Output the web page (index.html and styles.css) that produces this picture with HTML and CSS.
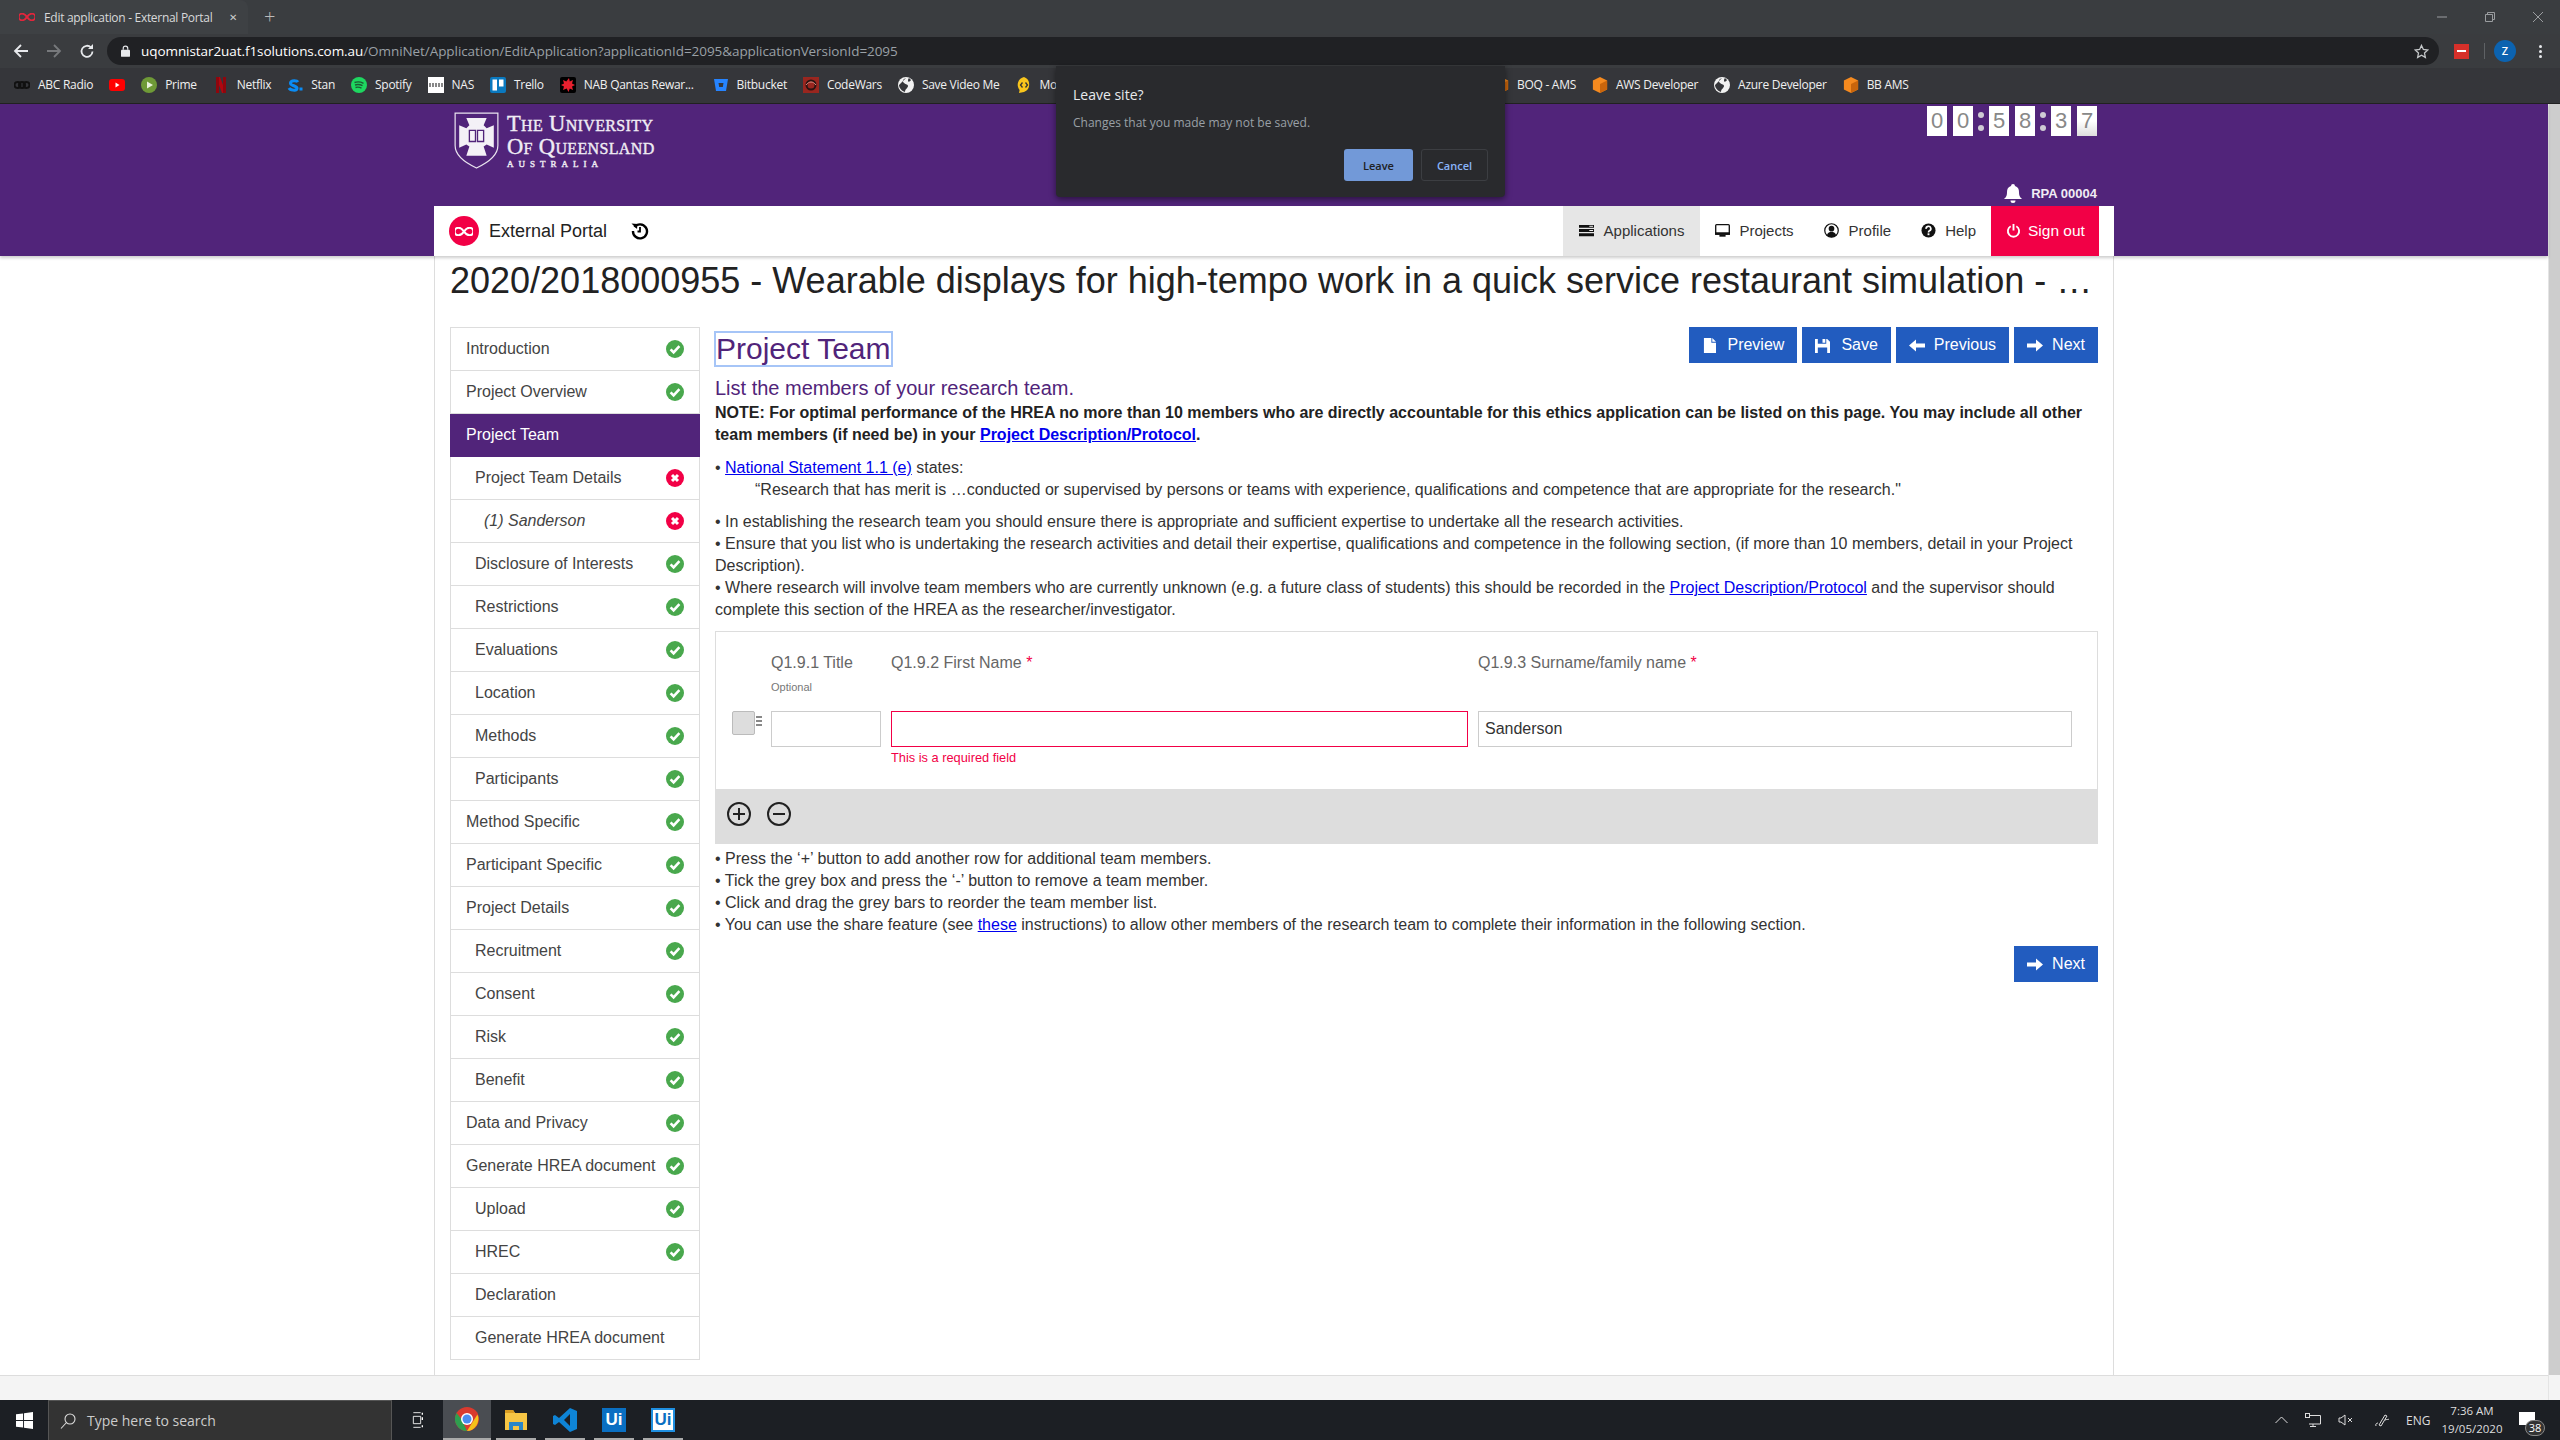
FILE: index.html
```html
<!DOCTYPE html>
<html lang="en">
<head>
<meta charset="utf-8">
<title>Edit application - External Portal</title>
<link rel="stylesheet" href="styles.css">
</head>
<body>
<svg class="defs" width="0" height="0" aria-hidden="true">
  <symbol id="ok" viewBox="0 0 18 18"><circle cx="9" cy="9" r="9" fill="#49a84d"/><path d="M4.6 9.4l3 3 5.8-6.2" fill="none" stroke="#fff" stroke-width="2.6"/></symbol>
  <symbol id="bad" viewBox="0 0 18 18"><circle cx="9" cy="9" r="9" fill="#f20046"/><path d="M6 6l6 6M12 6l-6 6" fill="none" stroke="#fff" stroke-width="3"/></symbol>
  <symbol id="inf" viewBox="0 0 24 12"><path d="M12 6C9 1.500 6.500 1 4.500 1A5 5 0 0 0 4.500 11C6.500 11 9 10.500 12 6C15 1.500 17.500 1 19.500 1A5 5 0 0 1 19.500 11C17.500 11 15 10.500 12 6Z" fill="none" stroke="currentColor" stroke-width="2.800"/></symbol>
  <symbol id="hex" viewBox="0 0 16 18"><path d="M8 0l8 4v10l-8 4-8-4V4z" fill="#f58a1f"/><path d="M8 8l8-4v10l-8 4z" fill="#c9650c"/></symbol>
  <symbol id="globe" viewBox="0 0 16 16"><circle cx="8" cy="8" r="8" fill="#f2f2f2"/><path d="M8 1C5 2 4 4 6 6s4 1 4 3-3 3-3 6c-3-1-6-4-6-7M13 3c-1 2-3 2-3 1s0-2 1-3" fill="#35363a"/></symbol>
</svg>

<header class="chrome">
  <div class="tabstrip">
    <div class="tab">
      <svg class="tab-ico"><use href="#inf"/></svg>
      <span class="tab-title">Edit application - External Portal</span>
      <span class="tab-x">✕</span>
    </div>
    <span class="tab-plus">+</span>
    <div class="winctl">
      <svg width="12" height="12" viewBox="0 0 12 12"><path d="M1 6h10" stroke="#9a9da0"/></svg>
      <svg width="12" height="12" viewBox="0 0 12 12"><path d="M1.500 3.500h7v7h-7zM3.500 3.500v-2h7v7h-2" fill="none" stroke="#9a9da0"/></svg>
      <svg width="12" height="12" viewBox="0 0 12 12"><path d="M1 1l10 10M11 1L1 11" stroke="#9a9da0"/></svg>
    </div>
  </div>
  <div class="toolbar">
    <svg class="tb-ico" viewBox="0 0 16 16"><path d="M15 8H2M8 2L2 8l6 6" fill="none" stroke="#e8eaed" stroke-width="1.800"/></svg>
    <svg class="tb-ico" viewBox="0 0 16 16"><path d="M1 8h13M8 2l6 6-6 6" fill="none" stroke="#77797c" stroke-width="1.800"/></svg>
    <svg class="tb-ico" viewBox="0 0 16 16"><path d="M13.500 8.500A5.500 5.500 0 1 1 12 4.500" fill="none" stroke="#e8eaed" stroke-width="1.800"/><path d="M14 1v5H9z" fill="#e8eaed"/></svg>
    <div class="omnibox">
      <svg class="lock" viewBox="0 0 10 13"><rect y="5" width="10" height="8" rx="1" fill="#e8eaed"/><path d="M2.500 5V3.500a2.500 2.500 0 0 1 5 0V5" fill="none" stroke="#e8eaed" stroke-width="1.300"/></svg>
      <span class="url"><span class="url-host">uqomnistar2uat.f1solutions.com.au</span>/OmniNet/Application/EditApplication?applicationId=2095&amp;applicationVersionId=2095</span>
      <svg class="star" viewBox="0 0 16 16"><path d="M8 1.500l2 4.300 4.700.6-3.500 3.200.9 4.700L8 11.900l-4.100 2.400.9-4.700L1.300 6.400 6 5.800z" fill="none" stroke="#c4c7c9" stroke-width="1.400"/></svg>
    </div>
    <div class="ext-red"><span></span></div>
    <div class="tb-sep"></div>
    <div class="avatar">Z</div>
    <div class="kebab"><i></i><i></i><i></i></div>
  </div>
  <div class="bookmarks">
    <div class="bm"><svg viewBox="0 0 16 16"><circle cx="3.500" cy="8" r="3" fill="none" stroke="#111" stroke-width="2"/><circle cx="8" cy="8" r="3" fill="none" stroke="#111" stroke-width="2"/><circle cx="12.500" cy="8" r="3" fill="none" stroke="#111" stroke-width="2"/></svg>ABC Radio</div>
    <div class="bm bm-icon"><svg viewBox="0 0 16 16"><rect y="2" width="16" height="12" rx="3" fill="#f00"/><path d="M6.500 5.500l4 2.500-4 2.500z" fill="#fff"/></svg></div>
    <div class="bm"><svg viewBox="0 0 16 16"><circle cx="8" cy="8" r="8" fill="#6f9a37"/><path d="M6 4.500l6 3.500-6 3.500z" fill="#e9f2dc"/></svg>Prime</div>
    <div class="bm"><svg viewBox="0 0 16 16"><path d="M3 0h4l6 16H9z" fill="#b00710"/><path d="M3 0h3v16H3zM10 0h3v16h-3z" fill="#8f060d"/></svg>Netflix</div>
    <div class="bm"><svg viewBox="0 0 16 16"><path d="M11 5C10 3.500 4 3 3.500 6s7 2.500 6.500 5.500S3 13 2 11" fill="none" stroke="#0a8cf5" stroke-width="3"/><rect x="12.500" y="10.500" width="3" height="3" fill="#0a8cf5"/></svg>Stan</div>
    <div class="bm"><svg viewBox="0 0 16 16"><circle cx="8" cy="8" r="8" fill="#1ed760"/><path d="M3.500 5.500c3-1 6-.8 9 .8M4 8c2.500-.8 5-.6 7.500.7M4.500 10.500c2-.6 4-.4 6 .6" fill="none" stroke="#1c5c33" stroke-width="1.400"/></svg>Spotify</div>
    <div class="bm"><svg viewBox="0 0 16 16"><rect width="16" height="16" fill="#fff"/><path d="M1 8h14" stroke="#888" stroke-width="4" stroke-dasharray="2 1"/></svg>NAS</div>
    <div class="bm"><svg viewBox="0 0 16 16"><rect width="16" height="16" rx="2" fill="#0a79bf"/><rect x="2.500" y="2.500" width="4.500" height="11" fill="#fff"/><rect x="9" y="2.500" width="4.500" height="7" fill="#fff"/></svg>Trello</div>
    <div class="bm bm-long"><svg viewBox="0 0 16 16"><rect width="16" height="16" rx="2" fill="#000"/><path d="M9 1l.8 3.500L13 3l-1 3.500L15 8l-3 1.500 1 3.500-3.200-1.500L8.500 15l-1.800-3.500L3 13l1-3.500L1 8l3-1.500L3 3l3.300 1.500z" fill="#e8202e"/></svg>NAB Qantas Rewar...</div>
    <div class="bm"><svg viewBox="0 0 16 16"><path d="M1 2h14l-2 12H3z" fill="#2684ff"/><path d="M5.500 6h5l-.7 4H6.200z" fill="#35363a"/></svg>Bitbucket</div>
    <div class="bm"><svg viewBox="0 0 16 16"><rect width="16" height="16" fill="#99261f"/><circle cx="8" cy="8" r="4.500" fill="none" stroke="#2b1412" stroke-width="2"/><path d="M3 8c3-4 7-4 10 0" fill="none" stroke="#d98a80" stroke-width="1"/></svg>CodeWars</div>
    <div class="bm"><svg><use href="#globe"/></svg>Save Video Me</div>
    <div class="bm"><svg viewBox="0 0 16 16"><path d="M8 0a8 8 0 0 1 0 15L3 16l.6-3A8 8 0 0 1 8 0z" fill="#f8c51c"/><path d="M6.500 5.500L4.500 8l2 2.500M9.500 5.500l2 2.500-2 2.500" fill="none" stroke="#333" stroke-width="1.300"/></svg>Mobile</div>
    <div class="bm bm-far"><svg><use href="#hex"/></svg>BOQ - AMS</div>
    <div class="bm"><svg><use href="#hex"/></svg>AWS Developer</div>
    <div class="bm"><svg><use href="#globe"/></svg>Azure Developer</div>
    <div class="bm"><svg><use href="#hex"/></svg>BB AMS</div>
  </div>
</header>

<div class="viewport">
  <div class="site">
    <div class="banner">
      <div class="banner-inner">
        <div class="masthead">
          <div class="uq">
            <svg class="uq-shield" viewBox="0 0 44 56">
              <path d="M1 1h42v32c0 10-10 17-21 22C11 50 1 43 1 33z" fill="none" stroke="#e9e3ef" stroke-width="1.200"/>
              <path d="M12 6h20l-3 7 3 3 7-3v22l-7-3-3 2 3 9H12l3-9-3-2-7 3V13l7 3 3-3z" fill="#f4f1f7"/>
              <path d="M15 18h6v11h-6zM23 18h6v11h-6z" fill="none" stroke="#51247a" stroke-width="1.300"/>
            </svg>
            <div class="uq-name">
              <div class="uq-line">The University</div>
              <div class="uq-line">Of Queensland</div>
              <div class="uq-sub">AUSTRALIA</div>
            </div>
          </div>
          <div class="mast-right">
            <div class="timer">
              <span class="dg">0</span><span class="dg">0</span><span class="colon"><i></i><i></i></span><span class="dg">5</span><span class="dg">8</span><span class="colon"><i></i><i></i></span><span class="dg">3</span><span class="dg dg-flip">7</span>
            </div>
            <div class="rpa">
              <svg class="bell" viewBox="0 0 20 20"><path d="M10 1a2 2 0 0 1 2 2c3 1 4 3 4 6 0 4 1 5 3 7H1c2-2 3-3 3-7 0-3 1-5 4-6a2 2 0 0 1 2-2zM7.500 17.500h5a2.500 2.500 0 0 1-5 0z" fill="#fff"/></svg>
              <span>RPA 00004</span>
            </div>
          </div>
        </div>
        <nav class="navbar">
          <div class="brand">
            <span class="brand-logo"><svg width="18" height="9"><use href="#inf"/></svg></span>
            <span class="brand-name">External Portal</span>
            <svg class="history" viewBox="0 0 18 18"><path d="M3.500 5A7 7 0 1 1 2 9" fill="none" stroke="#000" stroke-width="2.400"/><path d="M0.500 1.500l6 .5-.5 5z" fill="#000"/><path d="M9 5v4.500l-2.500 0" fill="none" stroke="#000" stroke-width="1.800"/></svg>
          </div>
          <div class="navlinks">
            <a class="nl nl-active"><svg viewBox="0 0 16 14"><path d="M0 1h16v3H0zM0 5.500h16v3H0zM0 10h16v3H0z" fill="#111"/><path d="M11 2.500h4M11 7h4" stroke="#fff"/></svg>Applications</a>
            <a class="nl nl-projects"><svg viewBox="0 0 17 15"><rect x=".8" y=".8" width="15.400" height="10.400" rx="1" fill="none" stroke="#111" stroke-width="1.500"/><rect y="9.500" width="17" height="3" fill="#111"/><rect x="5" y="12.500" width="7" height="2" fill="#111"/></svg>Projects</a>
            <a class="nl nl-profile"><svg viewBox="0 0 16 16"><circle cx="8" cy="8" r="7.200" fill="none" stroke="#111" stroke-width="1.300"/><circle cx="8" cy="6" r="3" fill="#111"/><path d="M3 13c1-3 3-3.500 5-3.500s4 .5 5 3.500a7 7 0 0 1-10 0z" fill="#111"/></svg>Profile</a>
            <a class="nl nl-help"><svg viewBox="0 0 16 16"><circle cx="8" cy="8" r="7.500" fill="#111"/><path d="M5.500 6.200A2.500 2.500 0 1 1 9 8.300c-.7.400-1 .8-1 1.700" fill="none" stroke="#fff" stroke-width="1.800"/><rect x="7" y="11" width="2" height="2" fill="#fff"/></svg>Help</a>
            <a class="nl nl-signout"><svg viewBox="0 0 16 16"><path d="M5 3.500a6 6 0 1 0 6 0" fill="none" stroke="#fff" stroke-width="2"/><path d="M8 1v7" stroke="#fff" stroke-width="2"/></svg>Sign out</a>
          </div>
        </nav>
      </div>
    </div>

    <div class="content">
      <div class="title-row">2020/2018000955 - Wearable displays for high-tempo work in a quick service restaurant simulation - …</div>
      <div class="columns">
        <aside class="sidebar">
          <div class="si"><span>Introduction</span><svg class="st"><use href="#ok"/></svg></div>
          <div class="si"><span>Project Overview</span><svg class="st"><use href="#ok"/></svg></div>
          <div class="si si-cur"><span>Project Team</span></div>
          <div class="si l2"><span>Project Team Details</span><svg class="st"><use href="#bad"/></svg></div>
          <div class="si l3"><span>(1) Sanderson</span><svg class="st"><use href="#bad"/></svg></div>
          <div class="si l2"><span>Disclosure of Interests</span><svg class="st"><use href="#ok"/></svg></div>
          <div class="si l2"><span>Restrictions</span><svg class="st"><use href="#ok"/></svg></div>
          <div class="si l2"><span>Evaluations</span><svg class="st"><use href="#ok"/></svg></div>
          <div class="si l2"><span>Location</span><svg class="st"><use href="#ok"/></svg></div>
          <div class="si l2"><span>Methods</span><svg class="st"><use href="#ok"/></svg></div>
          <div class="si l2"><span>Participants</span><svg class="st"><use href="#ok"/></svg></div>
          <div class="si"><span>Method Specific</span><svg class="st"><use href="#ok"/></svg></div>
          <div class="si"><span>Participant Specific</span><svg class="st"><use href="#ok"/></svg></div>
          <div class="si"><span>Project Details</span><svg class="st"><use href="#ok"/></svg></div>
          <div class="si l2"><span>Recruitment</span><svg class="st"><use href="#ok"/></svg></div>
          <div class="si l2"><span>Consent</span><svg class="st"><use href="#ok"/></svg></div>
          <div class="si l2"><span>Risk</span><svg class="st"><use href="#ok"/></svg></div>
          <div class="si l2"><span>Benefit</span><svg class="st"><use href="#ok"/></svg></div>
          <div class="si"><span>Data and Privacy</span><svg class="st"><use href="#ok"/></svg></div>
          <div class="si"><span>Generate HREA document</span><svg class="st"><use href="#ok"/></svg></div>
          <div class="si l2"><span>Upload</span><svg class="st"><use href="#ok"/></svg></div>
          <div class="si l2"><span>HREC</span><svg class="st"><use href="#ok"/></svg></div>
          <div class="si l2"><span>Declaration</span></div>
          <div class="si l2"><span>Generate HREA document</span></div>
        </aside>
        <main class="main">
          <div class="main-head">
            <h2 class="h-team">Project Team</h2>
            <div class="btns">
              <a class="btn btn-doc"><svg viewBox="0 0 14 16"><path d="M1 0h8v5h5v11H1zM10 0l4 4h-4z" fill="#fff"/></svg>Preview</a>
              <a class="btn btn-save"><svg viewBox="0 0 16 16"><path d="M0 1h3v5h9V1h1l3 3v12H0zM8 1h3v4H8zM3 10v6h10v-6z" fill="#fff"/></svg>Save</a>
              <a class="btn"><svg viewBox="0 0 16 14"><path d="M0 7l7-6v4h9v4H7v4z" fill="#fff"/></svg>Previous</a>
              <a class="btn"><svg viewBox="0 0 16 14"><path d="M16 7L9 1v4H0v4h9v4z" fill="#fff"/></svg>Next</a>
            </div>
          </div>
          <p class="lede">List the members of your research team.</p>
          <p class="para"><b>NOTE: For optimal performance of the HREA no more than 10 members who are directly accountable for this ethics application can be listed on this page. You may include all other team members (if need be) in your <a class="lnk">Project Description/Protocol</a>.</b></p>
          <p class="para sp">• <a class="lnk">National Statement 1.1 (e)</a> states:<br><span class="quote">“Research that has merit is …conducted or supervised by persons or teams with experience, qualifications and competence that are appropriate for the research."</span></p>
          <p class="para sp2">• In establishing the research team you should ensure there is appropriate and sufficient expertise to undertake all the research activities.<br>• Ensure that you list who is undertaking the research activities and detail their expertise, qualifications and competence in the following section, (if more than 10 members, detail in your Project Description).<br>• Where research will involve team members who are currently unknown (e.g. a future class of students) this should be recorded in the <a class="lnk">Project Description/Protocol</a> and the supervisor should complete this section of the HREA as the researcher/investigator.</p>
          <div class="fbox">
            <div class="fgrid">
              <div></div>
              <div class="flabel">Q1.9.1 Title<small>Optional</small></div>
              <div class="flabel">Q1.9.2 First Name <em>*</em></div>
              <div class="flabel">Q1.9.3 Surname/family name <em>*</em></div>
              <div class="handle"><span class="tick"></span><span class="grip"><i></i><i></i><i></i></span></div>
              <div class="input"></div>
              <div><div class="input input-bad"></div><div class="err">This is a required field</div></div>
              <div class="input">Sanderson</div>
            </div>
            <div class="fbar">
              <svg viewBox="0 0 24 24"><circle cx="12" cy="12" r="11" fill="none" stroke="#222" stroke-width="2"/><path d="M12 6v12M6 12h12" stroke="#222" stroke-width="2"/></svg>
              <svg viewBox="0 0 24 24"><circle cx="12" cy="12" r="11" fill="none" stroke="#222" stroke-width="2"/><path d="M6 12h12" stroke="#222" stroke-width="2"/></svg>
            </div>
          </div>
          <p class="para hints">• Press the ‘+’ button to add another row for additional team members.<br>• Tick the grey box and press the ‘-’ button to remove a team member.<br>• Click and drag the grey bars to reorder the team member list.<br>• You can use the share feature (see <a class="lnk">these</a> instructions) to allow other members of the research team to complete their information in the following section.</p>
          <div class="next-row"><a class="btn"><svg viewBox="0 0 16 14"><path d="M16 7L9 1v4H0v4h9v4z" fill="#fff"/></svg>Next</a></div>
        </main>
      </div>
    </div>
    <div class="pagefoot"></div>
  </div>
  <div class="scrollbar"><div class="thumb"></div></div>
</div>

<footer class="taskbar">
  <div class="start"><svg viewBox="0 0 18 18"><path d="M0 2.500l7.500-1v7H0zM8.500 1.300L18 0v8.500H8.500zM0 9.500h7.500v7l-7.500-1zM8.500 9.500H18V18l-9.500-1.300z" fill="#fff"/></svg></div>
  <div class="search"><svg viewBox="0 0 16 16"><circle cx="10" cy="6" r="5" fill="none" stroke="#ddd" stroke-width="1.100"/><path d="M6.500 9.500L1 15.500" stroke="#ddd" stroke-width="1.100"/></svg><span>Type here to search</span></div>
  <div class="task-view"><svg viewBox="0 0 16 24"><path d="M1 1h11M1 23h11M1 6.500h11v11H1z" fill="none" stroke="#fff" stroke-width="1.300"/><path d="M14.500 1v3M14.500 8v4M14.500 20v3" stroke="#fff" stroke-width="2"/></svg></div>
  <div class="tk tk-cur"><svg viewBox="0 0 24 24"><circle cx="12" cy="12" r="12" fill="#d93a2f"/><path d="M12 24a12 12 0 0 1-10.400-18L7 13l5 11z" fill="#2e9e4f"/><path d="M12 24l5-8 5.500-8.500A12 12 0 0 1 12 24z" fill="#f6c21a"/><circle cx="12" cy="12" r="6" fill="#fff"/><circle cx="12" cy="12" r="4.500" fill="#4a8cf0"/></svg></div>
  <div class="tk tk-on"><svg viewBox="0 0 24 24"><path d="M1 2h8l2 3h12v17H1z" fill="#f6c544"/><path d="M1 2h8l2 3H1z" fill="#d99c22"/><path d="M5 14h14v8h-4v-4H9v4H5z" fill="#2a86c8"/></svg></div>
  <div class="tk tk-on"><svg viewBox="0 0 24 24"><path d="M17 0l7 3v18l-7 3L6 14l-4 3-2-1V8l2-1 4 3z" fill="#0e84d6"/><path d="M17 6l-6 6 6 6z" fill="#1c1f24"/></svg></div>
  <div class="tk tk-on"><span class="ui ui-solid">Ui</span></div>
  <div class="tk tk-on"><span class="ui ui-line">Ui</span></div>
  <div class="tray">
    <svg width="13" height="8" viewBox="0 0 13 8"><path d="M.5 7l6-6 6 6" fill="none" stroke="#ddd"/></svg>
    <svg width="16" height="14" viewBox="0 0 16 14"><path d="M4 2.500h11.500v8.500H4M8 11v2.500M5 13.500h6" fill="none" stroke="#ddd"/><rect x=".5" y=".5" width="4" height="4" fill="#1c1f24" stroke="#ddd"/></svg>
    <svg width="15" height="12" viewBox="0 0 15 12"><path d="M1 4h2l4-3v10L3 8H1zM10 4l4 4M14 4l-4 4" fill="none" stroke="#ddd"/></svg>
    <svg class="tr-pen" width="16" height="16" viewBox="0 0 16 16"><path d="M2 14c-1-2 1-3 2-3M5 13l6-10 2 1-6 10zM11 8c2-1 3 0 4-1" fill="none" stroke="#ddd"/></svg>
    <span class="tr-lang">ENG</span>
    <div class="clock"><span>7:36 AM</span><span>19/05/2020</span></div>
    <div class="notif"><span class="notif-box"></span><span class="notif-n">38</span></div>
  </div>
</footer>

<div class="leave">
  <div class="leave-title">Leave site?</div>
  <div class="leave-msg">Changes that you made may not be saved.</div>
  <div class="leave-btns"><span class="lv lv-primary">Leave</span><span class="lv lv-plain">Cancel</span></div>
</div>
</body>
</html>
```

FILE: styles.css
```css
* { box-sizing: border-box; }
html, body { margin: 0; height: 100%; }
body {
  display: flex;
  flex-direction: column;
  height: 1440px;
  overflow: hidden;
  font-family: "Liberation Sans", Arial, sans-serif;
  font-size: 16px;
  color: #333;
  background: #fff;
}
.defs { position: absolute; }
p { margin: 0; }

/* browser chrome */
.chrome { flex: none; height: 104px; background: #35363a; font-family: "Open Sans", sans-serif; border-bottom: 1px solid #222; }
.tabstrip { height: 34px; display: flex; align-items: center; background: #3a3d40; position: relative; }
.tab { width: 248px; height: 34px; background: #3e4144; border-radius: 0 8px 0 0; display: flex; align-items: center; padding-left: 19px; color: #d8d9da; font-size: 12px; letter-spacing: -.3px; }
.tab-ico { width: 16px; height: 8px; color: #e0263c; margin-right: 9px; }
.tab-title { flex: 1; white-space: nowrap; }
.tab-x { font-size: 10px; margin-right: 11px; color: #ccc; }
.tab-plus { margin-left: 16px; font-size: 20px; color: #bbb; font-weight: 300; line-height: 1; }
.winctl { margin-left: auto; display: flex; gap: 36px; padding-right: 16px; }
.toolbar { height: 34px; display: flex; align-items: center; padding-left: 13px; background: #3a3c3f; }
.tb-ico { width: 16px; height: 16px; margin-right: 17px; flex: none; }
.omnibox { margin-left: -5px; width: 2332px; height: 28px; background: #202124; border-radius: 14px; display: flex; align-items: center; padding-left: 14px; }
.lock { width: 9px; height: 12px; margin-right: 11px; flex: none; }
.url { font-size: 13.500px; color: #9aa0a6; white-space: nowrap; flex: 1; letter-spacing: -.07px; }
.url-host { color: #fff; }
.star { width: 15px; height: 15px; margin-right: 10px; }
.ext-red { width: 15px; height: 15px; margin-left: 15px; background: #d6302a; display: flex; align-items: center; justify-content: center; flex: none; }
.ext-red span { width: 9px; height: 2px; background: #fff; }
.tb-sep { width: 1px; height: 16px; margin-left: 15px; background: #5f6265; }
.avatar { width: 22px; height: 22px; margin-left: 9px; border-radius: 50%; background: #0c63b0; color: #fff; font-size: 11px; font-weight: 600; text-align: center; line-height: 22px; flex: none; }
.kebab { margin-left: 23px; display: flex; flex-direction: column; gap: 2px; }
.kebab i { width: 3px; height: 3px; background: #e8eaed; border-radius: 50%; }
.bookmarks { height: 35px; display: flex; align-items: center; padding: 0 0 2px 14px; gap: 16px; background: #35363a; color: #f0f0f0; font-size: 12px; letter-spacing: -.28px; white-space: nowrap; }
.bm { display: flex; align-items: center; gap: 8px; }
.bm svg { width: 16px; height: 16px; flex: none; }
.bm-long { margin-right: 3px; }
.bm-far { margin-left: 401px; }

/* leave dialog */
.leave { position: absolute; z-index: 5; left: 1056px; top: 66px; width: 449px; height: 131px; background: #292a2d; box-shadow: 0 2px 6px rgba(0,0,0,.5); border-radius: 0 0 4px 4px; padding: 18px 16px 0 17px; font-family: "Open Sans", sans-serif; }
.leave-title { font-size: 14px; color: #e8eaed; line-height: 22px; }
.leave-msg { margin-top: 8px; font-size: 12px; color: #9aa0a6; line-height: 18px; }
.leave-btns { position: absolute; right: 17px; bottom: 16px; display: flex; gap: 8px; }
.lv { height: 32px; border-radius: 3px; font-size: 11px; font-weight: 600; display: flex; align-items: center; justify-content: center; }
.lv-primary { width: 69px; background: #7299d8; color: #202124; }
.lv-plain { width: 67px; border: 1px solid #3c3e42; color: #8ab4f8; }

/* page */
.viewport { flex: 1; display: flex; min-height: 0; }
.site { flex: 1; display: flex; flex-direction: column; min-width: 0; }
.scrollbar { width: 12px; flex: none; background: #f4f4f4; border-left: 1px solid #e4e4e4; }
.thumb { height: 1271px; background: #cdcdcd; }
.banner { flex: none; background: #51247a; height: 152px; box-shadow: 0 2px 3px rgba(0,0,0,.2); position: relative; z-index: 1; }
.banner-inner { width: 1680px; height: 100%; margin: 0 auto; display: flex; flex-direction: column; }
.masthead { height: 102px; display: flex; justify-content: space-between; }
.uq { display: flex; margin-left: 20px; padding-top: 8px; }
.uq-shield { width: 45px; height: 57px; margin-right: 8px; }
.uq-name { font-family: "Liberation Serif", serif; color: #f0ecf4; font-variant: small-caps; line-height: 23px; -webkit-text-stroke: .4px #f0ecf4; }
.uq-line { font-size: 22.500px; letter-spacing: .35px; white-space: nowrap; }
.uq-sub { font-size: 9px; font-variant: normal; letter-spacing: 5px; line-height: 12px; }
.mast-right { margin-right: 17px; display: flex; flex-direction: column; align-items: flex-end; padding-top: 2px; }
.timer { display: flex; gap: 6px; }
.dg { width: 20px; height: 30px; background: #fff; color: #888; font-size: 22px; line-height: 30px; text-align: center; }
.dg-flip { background: linear-gradient(#fff, #fff 50%, #ddd); }
.colon { width: 4px; display: flex; flex-direction: column; justify-content: center; align-items: center; gap: 7px; }
.colon i { flex: none; width: 6px; height: 6px; border-radius: 50%; background: #cfcbd4; }
.rpa { margin-top: 47px; display: flex; align-items: center; gap: 8px; color: #f0ecf4; font-size: 13px; font-weight: 700; }
.bell { width: 20px; height: 20px; }
.navbar { height: 50px; background: #fff; display: flex; justify-content: space-between; padding-right: 15px; }
.brand { display: flex; align-items: center; padding-left: 15px; }
.brand-logo { width: 30px; height: 30px; border-radius: 50%; background: #f20046; color: #fff; display: flex; align-items: center; justify-content: center; }
.brand-name { margin-left: 10px; font-size: 18px; color: #222; }
.history { width: 18px; height: 18px; margin-left: 24px; }
.navlinks { display: flex; }
.nl { display: flex; align-items: center; gap: 9px; padding: 0 15px 2px; font-size: 15px; color: #333; }
.nl svg { width: 15px; height: 15px; flex: none; }
.nl-active { background: #e6e6e6; padding: 0 16px 2px 16px; gap: 10px; }
.nl-profile { gap: 10px; }
.nl-help { padding-right: 14px; }
.nl-signout { background: #f20046; color: #fff; font-size: 15.500px; width: 108px; padding: 0 0 1px 15px; gap: 7px; margin-left: 1px; }

.content { flex: 1; width: 1680px; margin: 0 auto; border: solid #ddd; border-width: 0 1px; padding: 0 15px; min-height: 0; }
.title-row { height: 71px; font-size: 36px; line-height: 48px; color: #222; white-space: nowrap; padding-top: 1px; }
.columns { display: flex; gap: 15px; }
.sidebar { width: 250px; flex: none; }
.si { height: 43px; border: 1px solid #ddd; border-top-width: 0; padding-left: 15px; display: flex; align-items: center; justify-content: space-between; padding-right: 15px; color: #444; font-size: 16px; }
.si:first-child { border-top-width: 1px; height: 44px; }
.l2 { padding-left: 24px; }
.l3 { padding-left: 33px; font-style: italic; }
.si-cur { background: #51247a; border-color: #51247a; color: #fff; }
.st { width: 18px; height: 18px; flex: none; }

.main { flex: 1; min-width: 0; }
.main-head { display: flex; justify-content: space-between; align-items: flex-start; height: 47px; }
.h-team { margin: 5px 0 0; padding: 0 1px; font-size: 30px; line-height: 34px; font-weight: 400; color: #51247a; outline: 2px solid #a6c5f7; outline-offset: -1px; }
.btns { display: flex; gap: 5px; }
.btn { height: 36px; display: inline-flex; align-items: center; gap: 9px; padding: 0 13px; background: #225cbf; color: #fff; font-size: 16px; }
.btn svg { width: 16px; height: 15px; flex: none; }
.btn-doc { gap: 11px; padding-left: 14px; }
.btn-doc svg { width: 13px; }
.btn-save { gap: 11px; }
.btn-save svg { width: 15px; }
.lede { font-size: 20px; line-height: 28px; color: #51247a; }
.para { font-size: 16px; line-height: 22px; color: #333; }
.para b { color: #222; }
.sp { margin-top: 11px; }
.sp2 { margin-top: 10px; }
.lnk { color: #00e; text-decoration: underline; }
.quote { padding-left: 40px; }
.fbox { margin-top: 10px; border: 1px solid #ddd; border-bottom: 0; }
.fgrid { display: grid; grid-template-columns: 35px 110px 577px 594px; column-gap: 10px; padding: 20px 0 0 10px; height: 157px; align-content: start; }
.flabel { font-size: 16px; color: #666; line-height: 22px; height: 59px; }
.flabel small { display: block; font-size: 11px; line-height: 26px; color: #777; }
.flabel em { font-style: normal; color: #f20046; font-size: 16px; }
.input { height: 36px; border: 1px solid #ccc; padding-left: 6px; line-height: 34px; font-size: 16px; color: #333; }
.input-bad { border-color: #f20046; }
.err { font-size: 12.800px; line-height: 22px; color: #f20046; }
.handle { display: flex; align-items: flex-start; margin-left: 6px; }
.tick { flex: none; width: 23px; height: 24px; background: #ddd; border: 1px solid #bbb; border-radius: 2px; }
.grip { display: flex; flex-direction: column; gap: 2px; margin: 5px 0 0 1px; }
.grip i { width: 6px; height: 2px; background: #888; }
.fbar { height: 55px; background: #ddd; margin: 0 -1px; display: flex; align-items: flex-start; gap: 16px; padding: 13px 0 0 12px; }
.fbar svg { width: 24px; height: 24px; }
.hints { margin-top: 4px; }
.next-row { margin-top: 10px; display: flex; justify-content: flex-end; }

.pagefoot { flex: none; height: 25px; background: #f4f4f4; border-top: 1px solid #ddd; }

/* taskbar */
.taskbar { flex: none; height: 40px; background: #1c1f24; display: flex; align-items: stretch; font-family: "Open Sans", sans-serif; position: relative; z-index: 2; }
.start { width: 48px; display: flex; align-items: center; justify-content: center; }
.start svg { width: 17px; height: 17px; }
.search { width: 344px; background: #333; border: 1px solid #555; border-bottom: 0; display: flex; align-items: center; padding-left: 11px; color: #ccc; font-size: 14px; }
.search svg { width: 16px; height: 16px; margin-right: 11px; }
.task-view { width: 51px; display: flex; align-items: center; justify-content: center; }
.task-view svg { width: 16px; height: 16px; }
.tk { width: 48px; display: flex; align-items: center; justify-content: center; position: relative; margin-right: 1px; }
.tk svg { width: 24px; height: 24px; }
.tk-cur { background: #4a4d52; border-bottom: 2px solid #aaa; }
.tk-on::after { content: ""; position: absolute; left: 4px; right: 4px; bottom: 0; height: 2px; background: #aaa; }
.ui { width: 24px; height: 24px; font-size: 17px; font-weight: 600; text-align: center; line-height: 24px; color: #fff; font-family: "Liberation Sans", sans-serif; }
.ui-solid { background: #0a6fc2; }
.ui-line { border: 2px solid #1f8fe0; background: #fff; color: #0a6fc2; line-height: 20px; }
.tray { margin-left: auto; display: flex; align-items: center; gap: 17px; color: #ddd; font-size: 12px; }
.tr-pen { margin-left: 4px; }
.tr-lang { margin-left: -1px; margin-right: -5px; width: 24px; }
.clock { width: 60px; display: flex; flex-direction: column; align-items: center; font-size: 11.500px; line-height: 18px; }
.notif { width: 41px; height: 40px; position: relative; }
.notif-box { position: absolute; left: 0; top: 12px; width: 16px; height: 13px; background: #fff; }
.notif-n { position: absolute; left: 6px; top: 20px; width: 20px; height: 16px; border-radius: 8px; background: #333; border: 1px solid #888; font-size: 11px; line-height: 13px; text-align: center; color: #fff; }
```
